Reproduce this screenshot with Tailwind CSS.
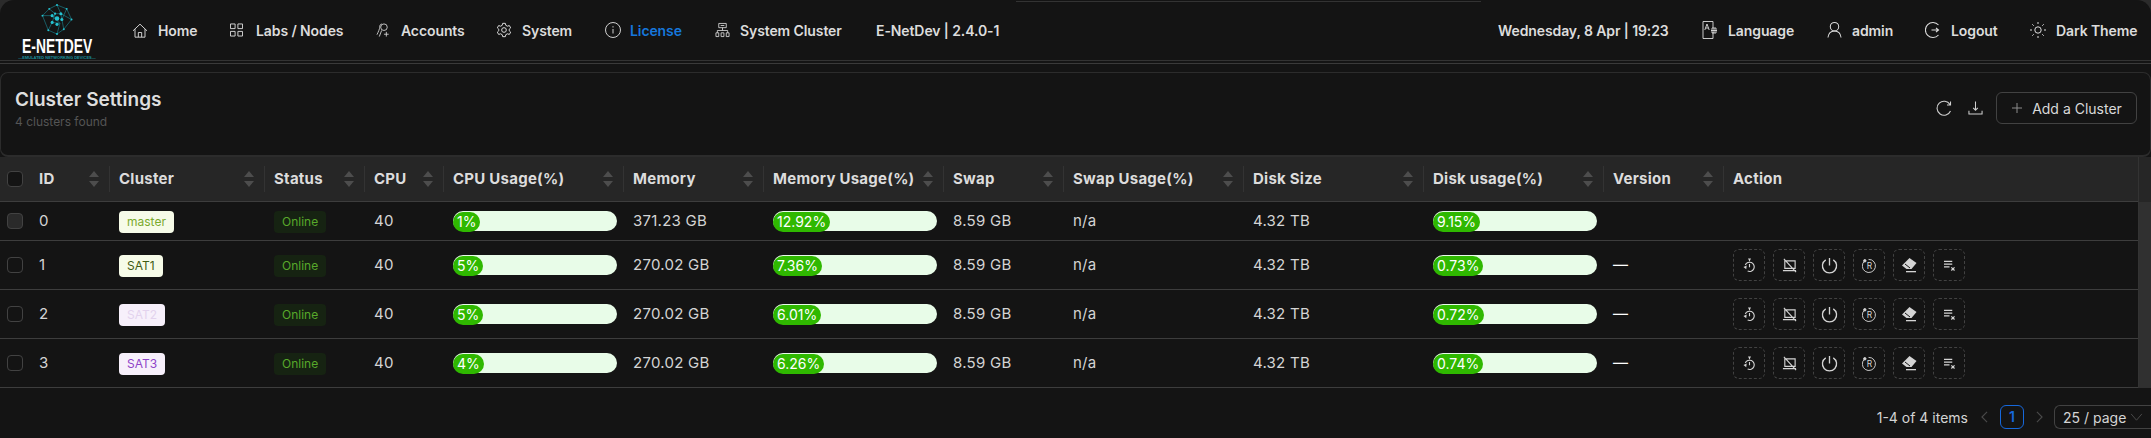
<!DOCTYPE html>
<html lang="en">
<head>
    <meta charset="UTF-8" />
    <meta name="viewport" content="width=device-width, initial-scale=1.0" />
    <script src="https://cdn.jsdelivr.net/npm/@tailwindcss/browser@4"></script>
    <title>Cluster Settings</title>
</head>
<body class="h-[438px] w-[2151px] overflow-hidden bg-[#2b2b2b] font-['Inter',sans-serif] text-[14px] text-[#dcdcdc]">
<div class="h-[438px] rounded-t-[14px] bg-[#141414]">

    <!-- Navbar -->
    <header class="relative flex h-[61px] items-center border-b border-[#333333] font-semibold tracking-[-0.1px]">
        <div class="absolute left-[1016px] top-[1px] h-px w-[465px] bg-[#333333]"></div>

        <div class="ml-[17px] flex w-[80px] flex-col items-center">
            <svg viewBox="0 0 32 32" class="mt-[3px] h-[31px] w-[32px]" fill="none" stroke="#1b8f9c" stroke-width="0.6">
                <path d="M16 1 L26 5 L31 16 L23 26 L16 31 L7 27 L1 12 L8 5 Z" />
                <path d="M16 1 L20 10 L31 16 M26 5 L21 16 L23 26 M16 31 L19 20 L11 19 L7 27 M1 12 L11 12 L19 20 M8 5 L14 10 L11 19 M14 10 L20 10 L21 16" />
                <g fill="#25c2d0" stroke="none">
                    <circle cx="16" cy="15" r="2.4" /><circle cx="11" cy="12" r="1.6" /><circle cx="20" cy="10" r="1.6" /><circle cx="14" cy="10" r="1.2" />
                    <circle cx="21" cy="16" r="1.6" /><circle cx="11" cy="19" r="1.6" /><circle cx="16" cy="21" r="1.6" />
                    <circle cx="16" cy="1" r="1" /><circle cx="26" cy="5" r="1" /><circle cx="31" cy="16" r="1" /><circle cx="23" cy="26" r="1" />
                    <circle cx="16" cy="31" r="1" /><circle cx="7" cy="27" r="1" /><circle cx="1" cy="12" r="1" /><circle cx="8" cy="5" r="1" />
                </g>
            </svg>
            <div class="mt-[2px] scale-x-[0.66] font-['Liberation_Sans',sans-serif] text-[21px] leading-[17px] font-bold tracking-normal whitespace-nowrap text-white">E-NETDEV</div>
            <div class="mt-[1px] font-['Liberation_Sans',sans-serif] text-[4px] leading-[5px] tracking-normal whitespace-nowrap text-[#1b8f9c]">—EMULATED NETWORKING DEVICES—</div>
        </div>

        <nav class="ml-[35px] flex items-center">
            <a class="flex w-[98px] items-center gap-[10px]">
                <svg viewBox="0 0 24 24" class="h-[17px] w-[16px]" fill="none" stroke="currentColor" stroke-width="1.4"><path d="M1.5 12.5 12 2.5l10.5 10M4.5 10v12h15V10M9.5 22v-7h5v7" /></svg>
                <span>Home</span>
            </a>
            <a class="flex w-[146px] items-center gap-[13px]">
                <svg viewBox="0 0 14 14" class="h-[14px] w-[13px]" fill="none" stroke="currentColor"><path d="M.5.5h5v5h-5zM8.500.5h5v5h-5zM.5 8.500h5v5h-5zM8.500 8.500h5v5h-5z" /></svg>
                <span>Labs / Nodes</span>
            </a>
            <a class="flex w-[120px] items-center gap-[10px]">
                <svg viewBox="0 0 16 16" class="h-[16px] w-[15px]" fill="none" stroke="currentColor" stroke-width="0.9"><circle cx="8.500" cy="5" r="3.500" /><path d="M6 1.500C4.500 2 4 3 4 5c0 1.500-1.500 5-3 8M6 8.500 3.500 15M11 10v5M8.500 12.500h5" /></svg>
                <span>Accounts</span>
            </a>
            <a class="flex w-[109px] items-center gap-[10px]">
                <svg viewBox="0 0 24 24" class="h-[16px] w-[16px]" fill="none" stroke="currentColor" stroke-width="1.500"><circle cx="12" cy="12" r="3.500" /><path d="M10 2h4l.7 3 2.400 1.300 2.900-1 2 3.500-2.200 2.100v2.200l2.200 2.100-2 3.500-2.900-1-2.400 1.300-.7 3h-4l-.7-3-2.400-1.300-2.900 1-2-3.500 2.200-2.100v-2.200L2 8.800l2-3.500 2.900 1 2.400-1.300z" /></svg>
                <span>System</span>
            </a>
            <a class="flex w-[110px] items-center gap-[9px] text-[#1677dc]">
                <svg viewBox="0 0 16 16" class="h-[16px] w-[16px] text-[#d0d0d0]" fill="none" stroke="currentColor"><circle cx="8" cy="8" r="7.500" /><path d="M8 7v4.500M8 4.200v1.300" /></svg>
                <span>License</span>
            </a>
            <a class="flex w-[161px] items-center gap-[10px]">
                <svg viewBox="0 0 16 16" class="h-[16px] w-[15px]" fill="none" stroke="currentColor" stroke-width="0.9"><path d="M4 1h8v4.500H4zM8 5.500v3M2.500 11V8.500h11V11M1 11h3v4H1zM6.500 11h3v4h-3zM12 11h3v4h-3zM6 3.200h4" /></svg>
                <span>System Cluster</span>
            </a>
            <span>E-NetDev | 2.4.0-1</span>
        </nav>

        <div class="ml-auto mr-[13px] flex items-center">
            <span class="w-[204px]">Wednesday, 8 Apr | 19:23</span>
            <a class="flex w-[125px] items-center gap-[10px]">
                <svg viewBox="0 0 16 20" class="h-[20px] w-[16px]" fill="none" stroke="currentColor" stroke-width="0.9"><path d="M11 12v6.500H1v-17h10V8" /><path d="M2.800 10 5 4l2.200 6M3.500 8h3M9 10.500h6M12 8v5M10 8h4v5h-4z" /></svg>
                <span>Language</span>
            </a>
            <a class="flex w-[98px] items-center gap-[10px]">
                <svg viewBox="0 0 16 18" class="h-[18px] w-[15px]" fill="none" stroke="currentColor" stroke-width="1.100"><circle cx="8" cy="5.500" r="4.500" /><path d="M1 17c.5-4 3-7 7-7s6.500 3 7 7" /></svg>
                <span>admin</span>
            </a>
            <a class="flex w-[105px] items-center gap-[10px]">
                <svg viewBox="0 0 16 18" class="h-[18px] w-[16px]" fill="none" stroke="currentColor" stroke-width="1.100"><path d="M13.500 4A7.500 7.500 0 1 0 13.500 14M6.500 9h7M11 7l2.500 2-2.500 2" /></svg>
                <span>Logout</span>
            </a>
            <a class="flex w-[108px] items-center gap-[10px] whitespace-nowrap">
                <svg viewBox="0 0 16 16" class="h-[16px] w-[16px]" fill="none" stroke="currentColor"><circle cx="8" cy="8" r="3.200" /><path d="M8 0v2M8 14v2M0 8h2M14 8h2M2.300 2.300l1.400 1.400M12.300 12.300l1.400 1.400M2.300 13.700l1.400-1.400M12.300 3.700l1.400-1.400" /></svg>
                <span>Dark Theme</span>
            </a>
        </div>
    </header>

    <div class="mt-[2px] h-px bg-[#3a3a3a]"></div>

    <!-- Cluster card -->
    <section class="mt-[8px] flex h-[85px] items-start justify-between rounded-lg border border-b-2 border-[#2c2c2c]">
        <div class="ml-[14px] mt-[14px]">
            <h1 class="text-[19px] leading-[26px] font-semibold text-[#dedede]">Cluster Settings</h1>
            <p class="mt-[1px] text-[12px] leading-[16px] text-[#555555]">4 clusters found</p>
        </div>
        <div class="mr-[13px] mt-[19px] flex items-center">
            <svg viewBox="0 0 16 16" class="h-[16px] w-[16px] text-[#d0d0d0]" fill="none" stroke="currentColor" stroke-width="1.100"><path d="M14 4.500A7 7 0 1 0 14.500 11M14.500 1.500v3.500H11" /></svg>
            <svg viewBox="0 0 16 16" class="ml-[16px] h-[16px] w-[15px] text-[#d0d0d0]" fill="none" stroke="currentColor" stroke-width="1.100"><path d="M8 1v9M5.500 7.800 8 10.300l2.500-2.500M1 11v3.500h14V11" /></svg>
            <button class="ml-[13px] flex h-[32px] w-[141px] items-center justify-center gap-[9px] rounded-md border border-[#424242] text-[#d9d9d9]">
                <svg viewBox="0 0 12 12" class="h-[12px] w-[12px] text-[#8c8c8c]" fill="none" stroke="currentColor"><path d="M6 1v10M1 6h10" /></svg>
                <span>Add a Cluster</span>
            </button>
        </div>
    </section>

    <!-- Table -->
    <table class="w-[2151px] table-fixed border-separate border-spacing-0 text-[15px] tracking-[0.25px]">
        <colgroup>
            <col class="w-[30px]" /><col class="w-[80px]" /><col class="w-[155px]" /><col class="w-[100px]" /><col class="w-[79px]" />
            <col class="w-[180px]" /><col class="w-[140px]" /><col class="w-[180px]" /><col class="w-[120px]" /><col class="w-[180px]" />
            <col class="w-[180px]" /><col class="w-[180px]" /><col class="w-[120px]" /><col class="w-[414px]" /><col class="w-[13px]" />
        </colgroup>
        <thead>
            <tr class="h-[45px] bg-[#262626] text-left font-semibold">
                <th class="border-b border-[#3d3d3d] pl-[7px]"><div class="h-[16px] w-[16px] rounded-[4px] border border-[#424242] bg-[#141414]"></div></th>
                <th class="border-b border-[#3d3d3d]"><div class="flex h-[26px] items-center justify-between border-r border-[#333333] pl-[9px] pr-[10px]"><span>ID</span><svg viewBox="0 0 10 16" class="h-[16px] w-[10px]" fill="#4d4d4d"><path d="M5 0l5 6H0zM5 16l5-6H0z" /></svg></div></th>
                <th class="border-b border-[#3d3d3d]"><div class="flex h-[26px] items-center justify-between border-r border-[#333333] pl-[9px] pr-[10px]"><span>Cluster</span><svg viewBox="0 0 10 16" class="h-[16px] w-[10px]" fill="#4d4d4d"><path d="M5 0l5 6H0zM5 16l5-6H0z" /></svg></div></th>
                <th class="border-b border-[#3d3d3d]"><div class="flex h-[26px] items-center justify-between border-r border-[#333333] pl-[9px] pr-[10px]"><span>Status</span><svg viewBox="0 0 10 16" class="h-[16px] w-[10px]" fill="#4d4d4d"><path d="M5 0l5 6H0zM5 16l5-6H0z" /></svg></div></th>
                <th class="border-b border-[#3d3d3d]"><div class="flex h-[26px] items-center justify-between border-r border-[#333333] pl-[9px] pr-[10px]"><span>CPU</span><svg viewBox="0 0 10 16" class="h-[16px] w-[10px]" fill="#4d4d4d"><path d="M5 0l5 6H0zM5 16l5-6H0z" /></svg></div></th>
                <th class="border-b border-[#3d3d3d]"><div class="flex h-[26px] items-center justify-between border-r border-[#333333] pl-[9px] pr-[10px]"><span>CPU Usage(%)</span><svg viewBox="0 0 10 16" class="h-[16px] w-[10px]" fill="#4d4d4d"><path d="M5 0l5 6H0zM5 16l5-6H0z" /></svg></div></th>
                <th class="border-b border-[#3d3d3d]"><div class="flex h-[26px] items-center justify-between border-r border-[#333333] pl-[9px] pr-[10px]"><span>Memory</span><svg viewBox="0 0 10 16" class="h-[16px] w-[10px]" fill="#4d4d4d"><path d="M5 0l5 6H0zM5 16l5-6H0z" /></svg></div></th>
                <th class="border-b border-[#3d3d3d]"><div class="flex h-[26px] items-center justify-between border-r border-[#333333] pl-[9px] pr-[10px]"><span>Memory Usage(%)</span><svg viewBox="0 0 10 16" class="h-[16px] w-[10px]" fill="#4d4d4d"><path d="M5 0l5 6H0zM5 16l5-6H0z" /></svg></div></th>
                <th class="border-b border-[#3d3d3d]"><div class="flex h-[26px] items-center justify-between border-r border-[#333333] pl-[9px] pr-[10px]"><span>Swap</span><svg viewBox="0 0 10 16" class="h-[16px] w-[10px]" fill="#4d4d4d"><path d="M5 0l5 6H0zM5 16l5-6H0z" /></svg></div></th>
                <th class="border-b border-[#3d3d3d]"><div class="flex h-[26px] items-center justify-between border-r border-[#333333] pl-[9px] pr-[10px]"><span>Swap Usage(%)</span><svg viewBox="0 0 10 16" class="h-[16px] w-[10px]" fill="#4d4d4d"><path d="M5 0l5 6H0zM5 16l5-6H0z" /></svg></div></th>
                <th class="border-b border-[#3d3d3d]"><div class="flex h-[26px] items-center justify-between border-r border-[#333333] pl-[9px] pr-[10px]"><span>Disk Size</span><svg viewBox="0 0 10 16" class="h-[16px] w-[10px]" fill="#4d4d4d"><path d="M5 0l5 6H0zM5 16l5-6H0z" /></svg></div></th>
                <th class="border-b border-[#3d3d3d]"><div class="flex h-[26px] items-center justify-between border-r border-[#333333] pl-[9px] pr-[10px]"><span>Disk usage(%)</span><svg viewBox="0 0 10 16" class="h-[16px] w-[10px]" fill="#4d4d4d"><path d="M5 0l5 6H0zM5 16l5-6H0z" /></svg></div></th>
                <th class="border-b border-[#3d3d3d]"><div class="flex h-[26px] items-center justify-between border-r border-[#333333] pl-[9px] pr-[10px]"><span>Version</span><svg viewBox="0 0 10 16" class="h-[16px] w-[10px]" fill="#4d4d4d"><path d="M5 0l5 6H0zM5 16l5-6H0z" /></svg></div></th>
                <th class="border-b border-[#3d3d3d] pl-[9px]">Action</th>
                <th class="border-l border-[#333333]"></th>
            </tr>
        </thead>
        <tbody class="text-[#d4d4d4]">
            <tr class="h-[39px]">
                <td class="border-b border-[#3d3d3d] pl-[7px]"><div class="h-[16px] w-[16px] rounded-[4px] border border-[#424242] bg-[#2a2a2a]"></div></td>
                <td class="border-b border-[#3d3d3d] pl-[9px]">0</td>
                <td class="border-b border-[#3d3d3d] pl-[9px]"><span class="inline-block h-[22px] rounded-[4px] bg-[#f6fbe8] px-[8px] text-[12px] leading-[22px] tracking-normal text-[#7aaa2e]">master</span></td>
                <td class="border-b border-[#3d3d3d] pl-[9px]"><span class="inline-block h-[22px] rounded-[4px] bg-[#162312] px-[8px] text-[12px] leading-[22px] tracking-normal text-[#58a82a]">Online</span></td>
                <td class="border-b border-[#3d3d3d] pl-[9px]">40</td>
                <td class="border-b border-[#3d3d3d] pl-[9px]"><div class="h-[20px] w-[164px] rounded-full bg-[#e8fce8]"><div class="inline-block h-[20px] rounded-full bg-[#2fb800] px-[4px] text-[14px] leading-[20px] tracking-normal text-white">1%</div></div></td>
                <td class="border-b border-[#3d3d3d] pl-[9px]">371.23 GB</td>
                <td class="border-b border-[#3d3d3d] pl-[9px]"><div class="h-[20px] w-[164px] rounded-full bg-[#e8fce8]"><div class="inline-block h-[20px] rounded-full bg-[#2fb800] px-[4px] text-[14px] leading-[20px] tracking-normal text-white">12.92%</div></div></td>
                <td class="border-b border-[#3d3d3d] pl-[9px]">8.59 GB</td>
                <td class="border-b border-[#3d3d3d] pl-[9px]">n/a</td>
                <td class="border-b border-[#3d3d3d] pl-[9px]">4.32 TB</td>
                <td class="border-b border-[#3d3d3d] pl-[9px]"><div class="h-[20px] w-[164px] rounded-full bg-[#e8fce8]"><div class="inline-block h-[20px] rounded-full bg-[#2fb800] px-[4px] text-[14px] leading-[20px] tracking-normal text-white">9.15%</div></div></td>
                <td class="border-b border-[#3d3d3d]"></td>
                <td class="border-b border-[#3d3d3d]"></td>
                <td rowspan="4" class="border-l border-[#333333] bg-[#303030]"></td>
            </tr>
            <tr class="h-[49px]">
                <td class="border-b border-[#3d3d3d] pl-[7px]"><div class="h-[16px] w-[16px] rounded-[4px] border border-[#424242]"></div></td>
                <td class="border-b border-[#3d3d3d] pl-[9px]">1</td>
                <td class="border-b border-[#3d3d3d] pl-[9px]"><span class="inline-block h-[22px] rounded-[4px] bg-[#f6fbe8] px-[8px] text-[12px] leading-[22px] tracking-normal text-[#3f5c14]">SAT1</span></td>
                <td class="border-b border-[#3d3d3d] pl-[9px]"><span class="inline-block h-[22px] rounded-[4px] bg-[#162312] px-[8px] text-[12px] leading-[22px] tracking-normal text-[#58a82a]">Online</span></td>
                <td class="border-b border-[#3d3d3d] pl-[9px]">40</td>
                <td class="border-b border-[#3d3d3d] pl-[9px]"><div class="h-[20px] w-[164px] rounded-full bg-[#e8fce8]"><div class="inline-block h-[20px] rounded-full bg-[#2fb800] px-[4px] text-[14px] leading-[20px] tracking-normal text-white">5%</div></div></td>
                <td class="border-b border-[#3d3d3d] pl-[9px]">270.02 GB</td>
                <td class="border-b border-[#3d3d3d] pl-[9px]"><div class="h-[20px] w-[164px] rounded-full bg-[#e8fce8]"><div class="inline-block h-[20px] rounded-full bg-[#2fb800] px-[4px] text-[14px] leading-[20px] tracking-normal text-white">7.36%</div></div></td>
                <td class="border-b border-[#3d3d3d] pl-[9px]">8.59 GB</td>
                <td class="border-b border-[#3d3d3d] pl-[9px]">n/a</td>
                <td class="border-b border-[#3d3d3d] pl-[9px]">4.32 TB</td>
                <td class="border-b border-[#3d3d3d] pl-[9px]"><div class="h-[20px] w-[164px] rounded-full bg-[#e8fce8]"><div class="inline-block h-[20px] rounded-full bg-[#2fb800] px-[4px] text-[14px] leading-[20px] tracking-normal text-white">0.73%</div></div></td>
                <td class="border-b border-[#3d3d3d] pl-[9px] text-white">—</td>
                <td class="border-b border-[#3d3d3d] pl-[9px]">
                    <div class="flex gap-[8px]">
                        <button class="flex h-[32px] w-[32px] items-center justify-center rounded-md border border-dashed border-[#424242]"><svg viewBox="0 0 14 16" class="h-[15px] w-[13px]" fill="none" stroke="currentColor" stroke-width="1.200"><path d="M5.500 1h3M7 1v2.500M2.500 7.500A5 5 0 1 1 5 14M7 6.500V10" /><path d="M.5 9.500 4 8l-.5 4z" fill="currentColor" stroke="none" /></svg></button>
                        <button class="flex h-[32px] w-[32px] items-center justify-center rounded-md border border-dashed border-[#424242]"><svg viewBox="0 0 16 16" class="h-[15px] w-[15px]" fill="none" stroke="currentColor" stroke-width="1.200"><path d="M3 3h11v8H3zM1 13.500h14M2 1l13 14" /></svg></button>
                        <button class="flex h-[32px] w-[32px] items-center justify-center rounded-md border border-dashed border-[#424242]"><svg viewBox="0 0 18 18" class="h-[17px] w-[17px]" fill="none" stroke="currentColor" stroke-width="1.400"><path d="M9 1v8M5 3a7.500 7.500 0 1 0 8 0" /></svg></button>
                        <button class="flex h-[32px] w-[32px] items-center justify-center rounded-md border border-dashed border-[#424242]"><svg viewBox="0 0 16 16" class="h-[15px] w-[15px]" fill="none" stroke="currentColor" stroke-width="1"><path d="M3 3a7 7 0 1 0 4-1.500" /><circle cx="3" cy="3" r="1.300" fill="currentColor" /><text x="8" y="11.500" text-anchor="middle" font-size="9" font-family="Inter" fill="currentColor" stroke="none">R</text></svg></button>
                        <button class="flex h-[32px] w-[32px] items-center justify-center rounded-md border border-dashed border-[#424242]"><svg viewBox="0 0 16 16" class="h-[16px] w-[16px]" fill="currentColor"><path d="M8.500 1 15.500 6 10.500 12H5.500L1 8.500z" /><path d="M4 7 9 11" fill="none" stroke="#141414" stroke-width="1" /><path d="M5 14h10v1.300H5z" /></svg></button>
                        <button class="flex h-[32px] w-[32px] items-center justify-center rounded-md border border-dashed border-[#424242]"><svg viewBox="0 0 12 12" class="h-[11px] w-[11px]" fill="none" stroke="currentColor" stroke-width="1.300"><path d="M0 1.500h9M0 4.500h9M0 7.500h6M8 8l3.500 3.500M11.500 8 8 11.500" /></svg></button>
                    </div>
                </td>
            </tr>
            <tr class="h-[49px]">
                <td class="border-b border-[#3d3d3d] pl-[7px]"><div class="h-[16px] w-[16px] rounded-[4px] border border-[#424242]"></div></td>
                <td class="border-b border-[#3d3d3d] pl-[9px]">2</td>
                <td class="border-b border-[#3d3d3d] pl-[9px]"><span class="inline-block h-[22px] rounded-[4px] bg-[#f7f0fb] px-[8px] text-[12px] leading-[22px] tracking-normal text-[#e3d3ee]">SAT2</span></td>
                <td class="border-b border-[#3d3d3d] pl-[9px]"><span class="inline-block h-[22px] rounded-[4px] bg-[#162312] px-[8px] text-[12px] leading-[22px] tracking-normal text-[#58a82a]">Online</span></td>
                <td class="border-b border-[#3d3d3d] pl-[9px]">40</td>
                <td class="border-b border-[#3d3d3d] pl-[9px]"><div class="h-[20px] w-[164px] rounded-full bg-[#e8fce8]"><div class="inline-block h-[20px] rounded-full bg-[#2fb800] px-[4px] text-[14px] leading-[20px] tracking-normal text-white">5%</div></div></td>
                <td class="border-b border-[#3d3d3d] pl-[9px]">270.02 GB</td>
                <td class="border-b border-[#3d3d3d] pl-[9px]"><div class="h-[20px] w-[164px] rounded-full bg-[#e8fce8]"><div class="inline-block h-[20px] rounded-full bg-[#2fb800] px-[4px] text-[14px] leading-[20px] tracking-normal text-white">6.01%</div></div></td>
                <td class="border-b border-[#3d3d3d] pl-[9px]">8.59 GB</td>
                <td class="border-b border-[#3d3d3d] pl-[9px]">n/a</td>
                <td class="border-b border-[#3d3d3d] pl-[9px]">4.32 TB</td>
                <td class="border-b border-[#3d3d3d] pl-[9px]"><div class="h-[20px] w-[164px] rounded-full bg-[#e8fce8]"><div class="inline-block h-[20px] rounded-full bg-[#2fb800] px-[4px] text-[14px] leading-[20px] tracking-normal text-white">0.72%</div></div></td>
                <td class="border-b border-[#3d3d3d] pl-[9px] text-white">—</td>
                <td class="border-b border-[#3d3d3d] pl-[9px]">
                    <div class="flex gap-[8px]">
                        <button class="flex h-[32px] w-[32px] items-center justify-center rounded-md border border-dashed border-[#424242]"><svg viewBox="0 0 14 16" class="h-[15px] w-[13px]" fill="none" stroke="currentColor" stroke-width="1.200"><path d="M5.500 1h3M7 1v2.500M2.500 7.500A5 5 0 1 1 5 14M7 6.500V10" /><path d="M.5 9.500 4 8l-.5 4z" fill="currentColor" stroke="none" /></svg></button>
                        <button class="flex h-[32px] w-[32px] items-center justify-center rounded-md border border-dashed border-[#424242]"><svg viewBox="0 0 16 16" class="h-[15px] w-[15px]" fill="none" stroke="currentColor" stroke-width="1.200"><path d="M3 3h11v8H3zM1 13.500h14M2 1l13 14" /></svg></button>
                        <button class="flex h-[32px] w-[32px] items-center justify-center rounded-md border border-dashed border-[#424242]"><svg viewBox="0 0 18 18" class="h-[17px] w-[17px]" fill="none" stroke="currentColor" stroke-width="1.400"><path d="M9 1v8M5 3a7.500 7.500 0 1 0 8 0" /></svg></button>
                        <button class="flex h-[32px] w-[32px] items-center justify-center rounded-md border border-dashed border-[#424242]"><svg viewBox="0 0 16 16" class="h-[15px] w-[15px]" fill="none" stroke="currentColor" stroke-width="1"><path d="M3 3a7 7 0 1 0 4-1.500" /><circle cx="3" cy="3" r="1.300" fill="currentColor" /><text x="8" y="11.500" text-anchor="middle" font-size="9" font-family="Inter" fill="currentColor" stroke="none">R</text></svg></button>
                        <button class="flex h-[32px] w-[32px] items-center justify-center rounded-md border border-dashed border-[#424242]"><svg viewBox="0 0 16 16" class="h-[16px] w-[16px]" fill="currentColor"><path d="M8.500 1 15.500 6 10.500 12H5.500L1 8.500z" /><path d="M4 7 9 11" fill="none" stroke="#141414" stroke-width="1" /><path d="M5 14h10v1.300H5z" /></svg></button>
                        <button class="flex h-[32px] w-[32px] items-center justify-center rounded-md border border-dashed border-[#424242]"><svg viewBox="0 0 12 12" class="h-[11px] w-[11px]" fill="none" stroke="currentColor" stroke-width="1.300"><path d="M0 1.500h9M0 4.500h9M0 7.500h6M8 8l3.500 3.500M11.500 8 8 11.500" /></svg></button>
                    </div>
                </td>
            </tr>
            <tr class="h-[49px]">
                <td class="border-b border-[#3d3d3d] pl-[7px]"><div class="h-[16px] w-[16px] rounded-[4px] border border-[#424242]"></div></td>
                <td class="border-b border-[#3d3d3d] pl-[9px]">3</td>
                <td class="border-b border-[#3d3d3d] pl-[9px]"><span class="inline-block h-[22px] rounded-[4px] bg-[#f7f0fb] px-[8px] text-[12px] leading-[22px] tracking-normal text-[#8e44c8]">SAT3</span></td>
                <td class="border-b border-[#3d3d3d] pl-[9px]"><span class="inline-block h-[22px] rounded-[4px] bg-[#162312] px-[8px] text-[12px] leading-[22px] tracking-normal text-[#58a82a]">Online</span></td>
                <td class="border-b border-[#3d3d3d] pl-[9px]">40</td>
                <td class="border-b border-[#3d3d3d] pl-[9px]"><div class="h-[20px] w-[164px] rounded-full bg-[#e8fce8]"><div class="inline-block h-[20px] rounded-full bg-[#2fb800] px-[4px] text-[14px] leading-[20px] tracking-normal text-white">4%</div></div></td>
                <td class="border-b border-[#3d3d3d] pl-[9px]">270.02 GB</td>
                <td class="border-b border-[#3d3d3d] pl-[9px]"><div class="h-[20px] w-[164px] rounded-full bg-[#e8fce8]"><div class="inline-block h-[20px] rounded-full bg-[#2fb800] px-[4px] text-[14px] leading-[20px] tracking-normal text-white">6.26%</div></div></td>
                <td class="border-b border-[#3d3d3d] pl-[9px]">8.59 GB</td>
                <td class="border-b border-[#3d3d3d] pl-[9px]">n/a</td>
                <td class="border-b border-[#3d3d3d] pl-[9px]">4.32 TB</td>
                <td class="border-b border-[#3d3d3d] pl-[9px]"><div class="h-[20px] w-[164px] rounded-full bg-[#e8fce8]"><div class="inline-block h-[20px] rounded-full bg-[#2fb800] px-[4px] text-[14px] leading-[20px] tracking-normal text-white">0.74%</div></div></td>
                <td class="border-b border-[#3d3d3d] pl-[9px] text-white">—</td>
                <td class="border-b border-[#3d3d3d] pl-[9px]">
                    <div class="flex gap-[8px]">
                        <button class="flex h-[32px] w-[32px] items-center justify-center rounded-md border border-dashed border-[#424242]"><svg viewBox="0 0 14 16" class="h-[15px] w-[13px]" fill="none" stroke="currentColor" stroke-width="1.200"><path d="M5.500 1h3M7 1v2.500M2.500 7.500A5 5 0 1 1 5 14M7 6.500V10" /><path d="M.5 9.500 4 8l-.5 4z" fill="currentColor" stroke="none" /></svg></button>
                        <button class="flex h-[32px] w-[32px] items-center justify-center rounded-md border border-dashed border-[#424242]"><svg viewBox="0 0 16 16" class="h-[15px] w-[15px]" fill="none" stroke="currentColor" stroke-width="1.200"><path d="M3 3h11v8H3zM1 13.500h14M2 1l13 14" /></svg></button>
                        <button class="flex h-[32px] w-[32px] items-center justify-center rounded-md border border-dashed border-[#424242]"><svg viewBox="0 0 18 18" class="h-[17px] w-[17px]" fill="none" stroke="currentColor" stroke-width="1.400"><path d="M9 1v8M5 3a7.500 7.500 0 1 0 8 0" /></svg></button>
                        <button class="flex h-[32px] w-[32px] items-center justify-center rounded-md border border-dashed border-[#424242]"><svg viewBox="0 0 16 16" class="h-[15px] w-[15px]" fill="none" stroke="currentColor" stroke-width="1"><path d="M3 3a7 7 0 1 0 4-1.500" /><circle cx="3" cy="3" r="1.300" fill="currentColor" /><text x="8" y="11.500" text-anchor="middle" font-size="9" font-family="Inter" fill="currentColor" stroke="none">R</text></svg></button>
                        <button class="flex h-[32px] w-[32px] items-center justify-center rounded-md border border-dashed border-[#424242]"><svg viewBox="0 0 16 16" class="h-[16px] w-[16px]" fill="currentColor"><path d="M8.500 1 15.500 6 10.500 12H5.500L1 8.500z" /><path d="M4 7 9 11" fill="none" stroke="#141414" stroke-width="1" /><path d="M5 14h10v1.300H5z" /></svg></button>
                        <button class="flex h-[32px] w-[32px] items-center justify-center rounded-md border border-dashed border-[#424242]"><svg viewBox="0 0 12 12" class="h-[11px] w-[11px]" fill="none" stroke="currentColor" stroke-width="1.300"><path d="M0 1.500h9M0 4.500h9M0 7.500h6M8 8l3.500 3.500M11.500 8 8 11.500" /></svg></button>
                    </div>
                </td>
            </tr>
        </tbody>
    </table>

    <!-- Pagination -->
    <div class="mt-[17px] flex items-center justify-end text-[#d4d4d4]">
        <span>1-4 of 4 items</span>
        <svg viewBox="0 0 10 14" class="ml-[12px] h-[12px] w-[9px] text-[#4a4a4a]" fill="none" stroke="currentColor" stroke-width="1.300"><path d="M8 1 2 7l6 6" /></svg>
        <div class="ml-[11px] h-[24px] w-[24px] rounded-md border border-[#1668dc] text-center leading-[22px] font-semibold text-[#1668dc]">1</div>
        <svg viewBox="0 0 10 14" class="ml-[11px] h-[12px] w-[9px] text-[#4a4a4a]" fill="none" stroke="currentColor" stroke-width="1.300"><path d="M2 1l6 6-6 6" /></svg>
        <div class="ml-[10px] flex h-[24px] w-[97px] items-center rounded-l-md border-y border-l border-[#424242] pl-[8px]">
            <span>25 / page</span>
            <svg viewBox="0 0 14 10" class="ml-[4px] h-[9px] w-[13px] text-[#4a4a4a]" fill="none" stroke="currentColor" stroke-width="1.100"><path d="m1 1 6 7 6-7" /></svg>
        </div>
    </div>
</div>
</body>
</html>
